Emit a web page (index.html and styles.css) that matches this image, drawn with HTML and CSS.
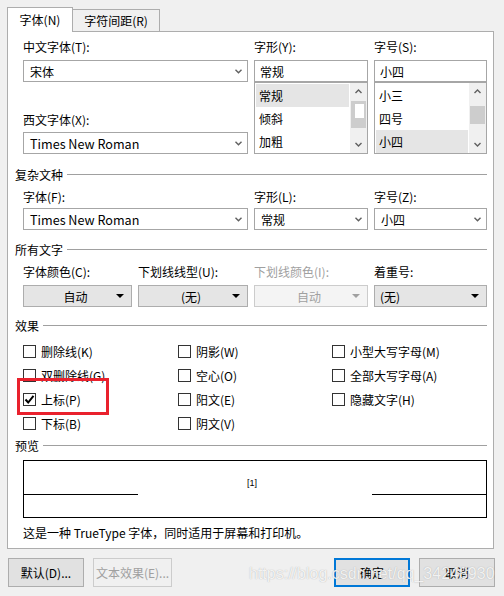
FILE: index.html
```html
<!DOCTYPE html>
<html>
<head>
<meta charset="utf-8">
<link rel="stylesheet" href="styles.css">
</head>
<body>
<div class="dialog">
  <div class="tabs">
    <div class="tab active">字体(N)</div>
    <div class="tab">字符间距(R)</div>
  </div>
  <div class="panel">
    <div class="main">
      <div class="col-a">
        <div class="lbl">中文字体(T):</div>
        <div class="combo"><span>宋体</span><svg class="chev" viewBox="0 0 7 5"><polyline points="0.5,0.8 3.5,3.8 6.5,0.8"/></svg></div>
        <div class="lbl lbl-west">西文字体(X):</div>
        <div class="combo combo-west"><span class="lat">Times New Roman</span><svg class="chev" viewBox="0 0 7 5"><polyline points="0.5,0.8 3.5,3.8 6.5,0.8"/></svg></div>
      </div>
      <div class="col-b">
        <div class="lbl">字形(Y):</div>
        <div class="input">常规</div>
        <div class="list">
          <div class="items">
            <div class="item sel">常规</div>
            <div class="item">倾斜</div>
            <div class="item">加粗</div>
          </div>
          <div class="sbar">
            <svg class="sarr" viewBox="0 0 7 5"><polyline points="0.5,4 3.5,1 6.5,4"/></svg>
            <div class="track"><div class="thumb thumb-a"><div class="thumb-in"></div></div></div>
            <svg class="sarr" viewBox="0 0 7 5"><polyline points="0.5,1 3.5,4 6.5,1"/></svg>
          </div>
        </div>
      </div>
      <div class="col-c">
        <div class="lbl">字号(S):</div>
        <div class="input">小四</div>
        <div class="list">
          <div class="items">
            <div class="item">小三</div>
            <div class="item">四号</div>
            <div class="item sel">小四</div>
          </div>
          <div class="sbar">
            <svg class="sarr" viewBox="0 0 7 5"><polyline points="0.5,4 3.5,1 6.5,4"/></svg>
            <div class="track"><div class="thumb thumb-b"></div></div>
            <svg class="sarr" viewBox="0 0 7 5"><polyline points="0.5,1 3.5,4 6.5,1"/></svg>
          </div>
        </div>
      </div>
    </div>

    <div class="heading"><span>复杂文种</span><i></i></div>
    <div class="row3">
      <div>
        <div class="lbl">字体(F):</div>
        <div class="combo"><span class="lat">Times New Roman</span><svg class="chev" viewBox="0 0 7 5"><polyline points="0.5,0.8 3.5,3.8 6.5,0.8"/></svg></div>
      </div>
      <div>
        <div class="lbl">字形(L):</div>
        <div class="combo"><span>常规</span><svg class="chev" viewBox="0 0 7 5"><polyline points="0.5,0.8 3.5,3.8 6.5,0.8"/></svg></div>
      </div>
      <div>
        <div class="lbl">字号(Z):</div>
        <div class="combo"><span>小四</span><svg class="chev" viewBox="0 0 7 5"><polyline points="0.5,0.8 3.5,3.8 6.5,0.8"/></svg></div>
      </div>
    </div>

    <div class="heading h-all"><span>所有文字</span><i></i></div>
    <div class="row4">
      <div>
        <div class="lbl">字体颜色(C):</div>
        <div class="dd center"><span>自动</span><svg class="tri" viewBox="0 0 8 4"><polygon points="0,0 8,0 4,4"/></svg></div>
      </div>
      <div>
        <div class="lbl">下划线线型(U):</div>
        <div class="dd center"><span>(无)</span><svg class="tri" viewBox="0 0 8 4"><polygon points="0,0 8,0 4,4"/></svg></div>
      </div>
      <div>
        <div class="lbl dis">下划线颜色(I):</div>
        <div class="dd center disabled"><span>自动</span><svg class="tri" viewBox="0 0 8 4"><polygon points="0,0 8,0 4,4"/></svg></div>
      </div>
      <div>
        <div class="lbl">着重号:</div>
        <div class="dd"><span>(无)</span><svg class="tri" viewBox="0 0 8 4"><polygon points="0,0 8,0 4,4"/></svg></div>
      </div>
    </div>

    <div class="heading h-eff"><span>效果</span><i></i></div>
    <div class="effects">
      <div class="ecol ecol1">
        <div class="cb"><b></b>删除线(K)</div>
        <div class="cb"><b></b>双删除线(G)</div>
        <div class="cb"><b class="on"><svg viewBox="0 0 11 11"><polyline points="1.5,5.5 4.2,8.5 9.5,1.8"/></svg></b>上标(P)</div>
        <div class="cb"><b></b>下标(B)</div>
      </div>
      <div class="ecol ecol2">
        <div class="cb"><b></b>阴影(W)</div>
        <div class="cb"><b></b>空心(O)</div>
        <div class="cb"><b></b>阳文(E)</div>
        <div class="cb"><b></b>阴文(V)</div>
      </div>
      <div class="ecol ecol3">
        <div class="cb"><b></b>小型大写字母(M)</div>
        <div class="cb"><b></b>全部大写字母(A)</div>
        <div class="cb"><b></b>隐藏文字(H)</div>
      </div>
    </div>

    <div class="heading h-prev"><span>预览</span><i></i></div>
    <div class="preview">
      <i class="pl pl-left"></i>
      <span class="ptext">[1]</span>
      <i class="pl pl-right"></i>
    </div>
    <div class="desc">这是一种 TrueType 字体，同时适用于屏幕和打印机。</div>
  </div>

  <div class="buttons">
    <div class="btn">默认(D)...</div>
    <div class="btn btn-dis">文本效果(E)...</div>
    <div class="spacer"></div>
    <div class="btn btn-def">确定</div>
    <div class="btn">取消</div>
  </div>

  <div class="highlight"></div>
  <div class="watermark">https://blog.csdn.net/qq_34248930</div>
</div>
</body>
</html>
```

FILE: styles.css
```css
* { box-sizing: border-box; }
html, body { margin: 0; padding: 0; }
body {
  width: 504px;
  height: 596px;
  background: #f0f0f0;
  font-family: "Noto Sans CJK SC", "Noto Sans", sans-serif;
  font-size: 12px;
  color: #000;
  overflow: hidden;
}
.dialog { position: relative; width: 504px; height: 596px; padding-top: 7px; }

.tabs { display: flex; align-items: flex-end; height: 24px; margin-left: 7px; position: relative; z-index: 2; }
.tab {
  height: 22px;
  width: 87px;
  border: 1px solid #adadad;
  border-left: none;
  border-bottom: none;
  background: #f0f0f0;
  display: flex; align-items: center; justify-content: center;
  line-height: 1;
}
.tab.active {
  height: 25px;
  width: 66px;
  border-left: 1px solid #adadad;
  background: #fff;
  margin-bottom: -1px;
}

.panel {
  margin-left: 7px;
  width: 487px;
  height: 518px;
  background: #fff;
  border: 1px solid #adadad;
  padding: 7px 6px 0 7px;
  position: relative;
  z-index: 1;
}

.lbl { height: 16px; line-height: 16px; white-space: nowrap; }
.lbl.dis { color: #a0a0a0; }

.main { display: flex; gap: 6px; padding-left: 8px; }
.col-a { width: 225px; }
.col-b { width: 114px; }
.col-c { width: 113px; }
.main .lbl { margin-bottom: 5px; }
.main .lbl-west { margin-top: 30px; margin-bottom: 4px; }

.combo {
  height: 22px;
  border: 1px solid #a6a6a6;
  background: #fff;
  display: flex; align-items: center;
  padding: 0 5px 0 6px;
}
.combo span { flex: 1; white-space: nowrap; }
.lat { font-size: 12.6px; }
.chev { width: 7px; height: 5px; fill: none; stroke: #606060; stroke-width: 1.4; }

.input {
  height: 22px;
  border: 1px solid #a6a6a6;
  display: flex; align-items: center;
  padding-left: 5px;
}
.list {
  height: 72px;
  border: 1px solid #a6a6a6;
  display: flex;
  padding: 1px 0 1px 1px;
  overflow: hidden;
}
.items { flex: 1; padding-right: 1px; }
.item { height: 23px; display: flex; align-items: center; padding-left: 3px; }
.item.sel { background: #e5e5e5; }
.sbar {
  width: 17px;
  background: #f0f0f0;
  display: flex; flex-direction: column; align-items: center;
  margin: -1px 0;
}
.sarr { width: 7px; height: 5px; fill: none; stroke: #606060; stroke-width: 1.4; margin: 6px 0; }
.track { flex: 1; width: 100%; position: relative; }
.thumb { position: absolute; left: 1px; right: 1px; background: #cdcdcd; }
.thumb-a { top: 1px; height: 27px; padding: 3px; }
.thumb-in { width: 9px; height: 14px; background: #fff; margin-left: 1px; }
.thumb-b { top: 6px; height: 18px; }

.heading { display: flex; align-items: center; height: 16px; margin-top: 12px; }
.heading span { white-space: nowrap; }
.heading i { flex: 1; border-top: 1px solid #a0a0a0; margin-left: 4px; }
.h-all { margin-top: 11px; }
.h-eff { margin-top: 10px; }
.h-prev { margin-top: 2px; }

.row3 { display: grid; grid-template-columns: 225px 114px 113px; gap: 6px; padding-left: 8px; margin-top: 7px; }
.row3 .lbl { margin-bottom: 3px; }

.row4 { display: grid; grid-template-columns: 109px 110px 114px 113px; gap: 6px; padding-left: 8px; margin-top: 7px; }
.row4 .lbl { margin-bottom: 5px; }
.dd {
  height: 22px;
  border: 1px solid #adadad;
  background: #e5e5e5;
  display: flex; align-items: center;
  padding: 0 7px 0 5px;
}
.dd span { flex: 1; }
.dd.center span { text-align: center; padding-left: 6px; }
.tri { width: 8px; height: 4px; fill: #000; }
.dd.disabled { background: #f4f4f4; border-color: #cccccc; color: #a0a0a0; }
.dd.disabled .tri { fill: #a0a0a0; }

.effects { display: flex; padding-left: 8px; margin-top: 6px; height: 96px; }
.ecol1 { width: 155px; }
.ecol2 { width: 154px; }
.ecol3 { flex: 1; }
.cb { height: 24px; display: flex; align-items: center; white-space: nowrap; }
.cb b {
  width: 13px; height: 13px;
  border: 1px solid #333;
  background: #fff;
  margin-right: 5px;
  display: flex; align-items: center; justify-content: center;
}
.cb b svg { width: 11px; height: 11px; fill: none; stroke: #000; stroke-width: 2; }

.preview {
  margin: 7px 0 0 8px;
  height: 58px;
  border: 1px solid #000;
  position: relative;
  display: flex;
}
.pl { position: absolute; top: 33px; height: 1px; background: #000; width: 114px; }
.pl-left { left: 0; }
.pl-right { right: 0; }
.ptext {
  position: absolute; left: 223px; top: 17px;
  font-family: "Liberation Sans", sans-serif; font-size: 9px;
}
.desc { margin: 7px 0 0 8px; height: 16px; line-height: 16px; white-space: nowrap; }

.buttons { display: flex; margin-top: 9px; padding: 0 9px 0 8px; gap: 9px; }
.spacer { flex: 1; }
.btn {
  width: 76px; height: 29px;
  border: 1px solid #adadad;
  background: #e1e1e1;
  display: flex; align-items: center; justify-content: center;
  white-space: nowrap;
}
.btn-dis { width: 79px; border-color: #cccccc; background: #f0f0f0; color: #a0a0a0; }
.btn-def { border: 1px solid #0078d7; box-shadow: inset 0 0 0 1px #0078d7; }

.highlight {
  position: absolute; left: 17px; top: 378px; width: 92px; height: 37px;
  border: 3.5px solid #e9212d;
  z-index: 5;
}
.watermark {
  position: absolute; left: 249px; top: 565px;
  font-family: "Liberation Sans", sans-serif; font-size: 16px;
  line-height: 18px;
  color: rgba(255,255,255,0.85);
  text-shadow: 0 0 1px rgba(110,110,110,0.55);
  z-index: 6;
  white-space: nowrap;
}
```
